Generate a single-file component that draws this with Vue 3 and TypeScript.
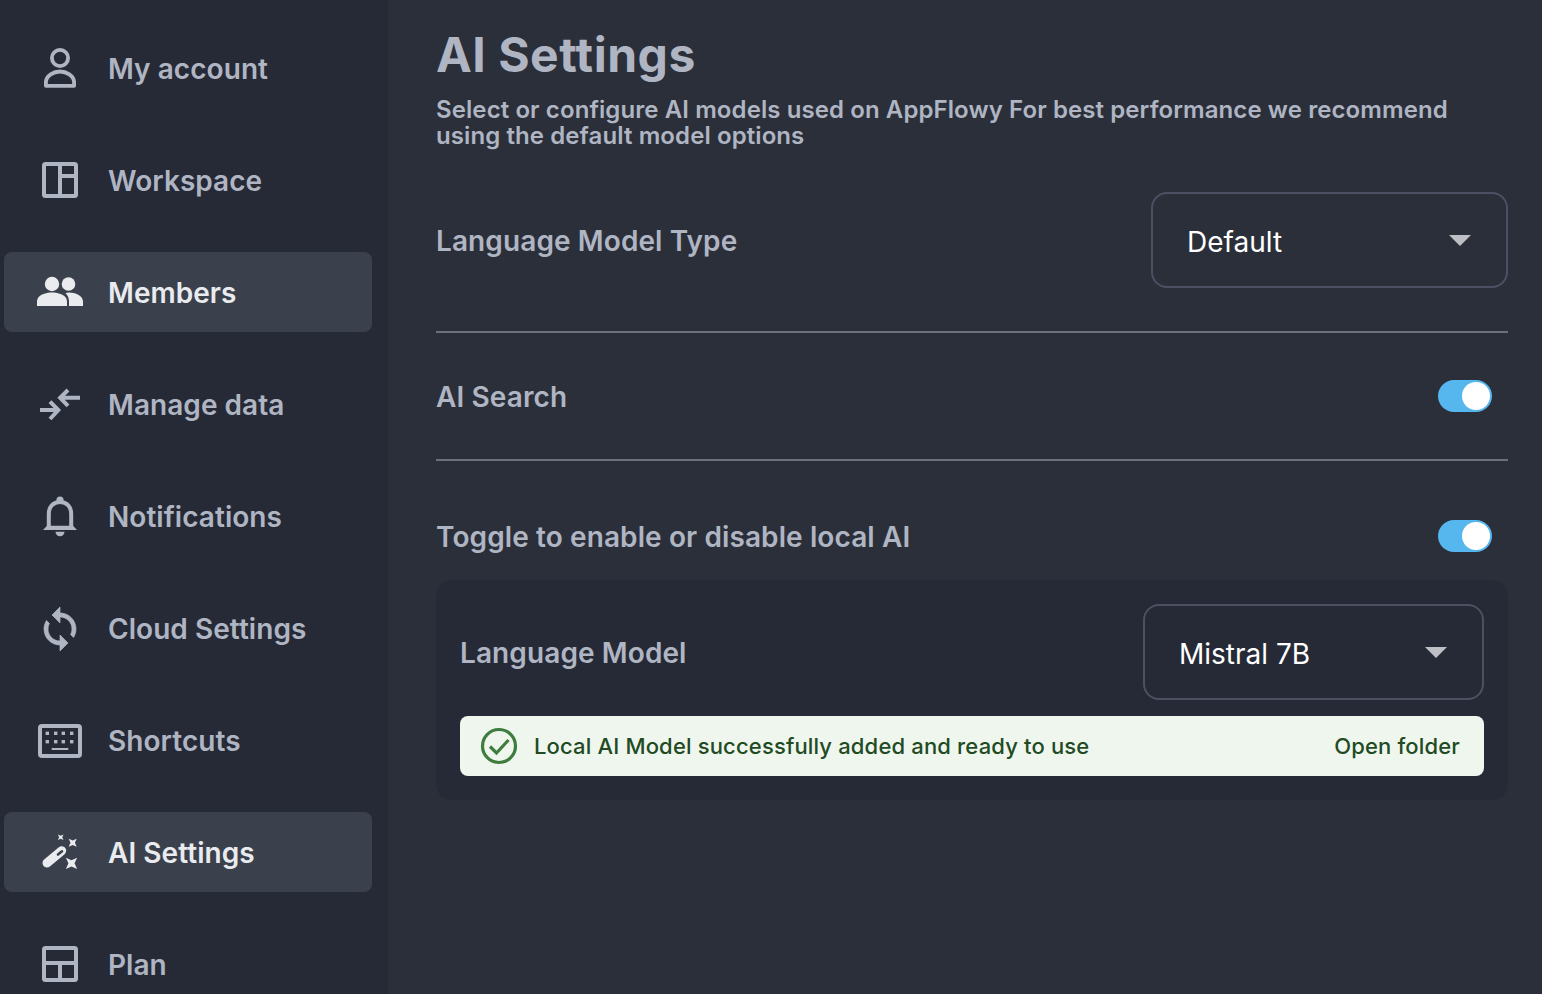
<script setup lang="ts">
interface NavItem {
  id: string
  label: string
  active?: boolean
}

const items: NavItem[] = [
  { id: 'account', label: 'My account' },
  { id: 'workspace', label: 'Workspace' },
  { id: 'members', label: 'Members', active: true },
  { id: 'data', label: 'Manage data' },
  { id: 'bell', label: 'Notifications' },
  { id: 'cloud', label: 'Cloud Settings' },
  { id: 'keys', label: 'Shortcuts' },
  { id: 'ai', label: 'AI Settings', active: true },
  { id: 'plan', label: 'Plan' },
]

const keyDots: { x: number; y: number }[] = []
for (const y of [14.6, 23]) {
  for (const x of [9.6, 18, 25.6, 34]) keyDots.push({ x, y })
}

function star(cx: number, cy: number, r: number): string {
  const k = r * 0.55
  return `M${cx - r} ${cy - r}L${cx} ${cy - k}L${cx + r} ${cy - r}L${cx + k} ${cy}L${cx + r} ${cy + r}L${cx} ${cy + k}L${cx - r} ${cy + r}L${cx - k} ${cy}Z`
}
</script>

<template>
  <div class="page">
    <aside class="sidebar">
      <div v-for="item in items" :key="item.id" class="nav-item" :class="{ active: item.active }">
        <svg class="nav-icon" viewBox="0 0 48 48" aria-hidden="true">
          <g v-if="item.id === 'account'" fill="none" stroke="currentColor" stroke-width="3.8">
            <circle cx="24" cy="13" r="8.1" />
            <path d="M9.900 40.800v-3.300c0-7 8-11 14.100-11s14.100 4 14.100 11v3.300z" stroke-linejoin="round" />
          </g>
          <g v-else-if="item.id === 'workspace'" fill="none" stroke="currentColor" stroke-width="4">
            <rect x="8" y="7" width="32" height="32" rx="1.500" />
            <path d="M24 7v32M24 19h16" />
          </g>
          <g v-else-if="item.id === 'members'" fill="currentColor">
            <circle cx="16" cy="15" r="7.200" />
            <circle cx="32.500" cy="15" r="6.800" />
            <path d="M1 37v-4.500C1 26 9.500 23.500 16 23.500s15 2.500 15 9V37z" />
            <path d="M33 37v-4.500c0-3.500-1.300-6.300-3.500-8.200 1.100-.3 2.200-.8 3.500-.8 6 0 14 3 14 9V37z" />
          </g>
          <g v-else-if="item.id === 'data'" fill="none" stroke="currentColor" stroke-width="4">
            <path d="M44 16.700H26.500M32 9l-7.800 7.800 7.800 8" />
            <path d="M4 29h19M14 20.700l8.300 8.300L14 38" />
          </g>
          <g v-else-if="item.id === 'bell'" fill="currentColor">
            <circle cx="24" cy="7" r="3.600" />
            <path d="M12.800 34V21C12.800 14 17 9 24 9s11.200 5 11.200 12v13" fill="none" stroke="currentColor" stroke-width="4" />
            <path d="M7 37l4-4.300h26l4 4.300z" />
            <path d="M19.500 38.700h9a4.500 4.500 0 0 1-9 0z" />
          </g>
          <path
            v-else-if="item.id === 'cloud'"
            transform="scale(2)"
            fill="currentColor"
            stroke="currentColor"
            stroke-width=".35"
            d="M12 4V1L8 5l4 4V6c3.310 0 6 2.690 6 6 0 1.010-.25 1.970-.7 2.800l1.460 1.460C19.540 15.030 20 13.570 20 12c0-4.420-3.580-8-8-8zm0 14c-3.310 0-6-2.690-6-6 0-1.010.25-1.970.7-2.800L5.240 7.740C4.460 8.970 4 10.430 4 12c0 4.420 3.580 8 8 8v3l4-4-4-4v3z"
          />
          <g v-else-if="item.id === 'keys'" fill="currentColor">
            <rect x="4" y="9" width="40" height="30" rx="2" fill="none" stroke="currentColor" stroke-width="4" />
            <rect v-for="(d, i) in keyDots" :key="i" :x="d.x" :y="d.y" width="3.400" height="3.400" />
            <rect x="15.700" y="31" width="16.600" height="2" />
          </g>
          <g v-else-if="item.id === 'ai'" fill="currentColor">
            <path d="M11 34 25.700 21.700" stroke="currentColor" stroke-width="9" stroke-linecap="round" fill="none" />
            <path d="M22 25.500 26 22.300" stroke="#3b414c" stroke-width="2.600" stroke-linecap="round" fill="none" />
            <path :d="star(24.700, 8.300, 2.800)" />
            <path :d="star(36.700, 13.700, 4)" />
            <path :d="star(35.500, 34.300, 5.600)" />
          </g>
          <g v-else fill="none" stroke="currentColor" stroke-width="4">
            <rect x="8" y="7" width="32" height="32" rx="1.500" />
            <path d="M8 22h32M24 22v17" />
          </g>
        </svg>
        <span class="nav-label">{{ item.label }}</span>
      </div>
    </aside>

    <main class="content">
      <h1 class="title">AI Settings</h1>
      <p class="desc">Select or configure AI models used on AppFlowy For best performance we recommend using the default model options</p>

      <section class="row row-select">
        <span class="label">Language Model Type</span>
        <div class="select select-wide">
          <span class="select-value">Default</span>
          <i class="caret"></i>
        </div>
      </section>
      <hr class="rule" />
      <section class="row row-toggle">
        <span class="label">AI Search</span>
        <div class="toggle"><i class="knob"></i></div>
      </section>
      <hr class="rule" />
      <section class="row row-toggle row-local">
        <span class="label">Toggle to enable or disable local AI</span>
        <div class="toggle"><i class="knob"></i></div>
      </section>

      <section class="card">
        <div class="row">
          <span class="label">Language Model</span>
          <div class="select select-narrow">
            <span class="select-value">Mistral 7B</span>
            <i class="caret"></i>
          </div>
        </div>
        <div class="banner">
          <svg class="check" viewBox="0 0 38 38" aria-hidden="true">
            <circle cx="19" cy="19" r="16.500" fill="none" stroke="#3e7d3e" stroke-width="3.200" />
            <path d="M10 19.500l6.500 6.500L28.500 13" fill="none" stroke="#3e7d3e" stroke-width="3.200" />
          </svg>
          <span class="banner-text">Local AI Model successfully added and ready to use</span>
          <span class="banner-action">Open folder</span>
        </div>
      </section>
    </main>
  </div>
</template>

<style scoped>
.page {
  display: flex;
  height: 994px;
  overflow: hidden;
  background: #2b2f3a;
  font-family: Inter, "Liberation Sans", sans-serif;
}
.sidebar {
  flex: 0 0 388px;
  box-sizing: border-box;
  padding: 28px 16px 0 4px;
  display: flex;
  flex-direction: column;
  gap: 32px;
  background: #262a36;
}
.nav-item {
  flex: 0 0 80px;
  display: flex;
  align-items: center;
  gap: 24px;
  padding-left: 32px;
  border-radius: 8px;
  color: #afb5c2;
}
.nav-item.active {
  background: #3b414c;
  color: #e9ebee;
}
.nav-icon {
  flex: 0 0 48px;
  width: 48px;
  height: 48px;
  margin-top: 2px;
}
.nav-label {
  padding-top: 2px;
  font-size: 28px;
  font-weight: 600;
  line-height: 34px;
  letter-spacing: 0.05px;
}
.content {
  flex: 1;
  min-width: 0;
  padding: 26px 34px 0 48px;
  box-sizing: border-box;
}
.title {
  margin: 0;
  font-size: 48px;
  line-height: 58px;
  font-weight: 700;
  letter-spacing: 0.5px;
  color: #afb5c2;
}
.desc {
  margin: 13px 0 0;
  font-size: 24px;
  line-height: 26px;
  font-weight: 600;
  letter-spacing: 0.09px;
  color: #afb5c2;
}
.row {
  display: flex;
  align-items: center;
  justify-content: space-between;
}
.row-select {
  margin-top: 43px;
}
.label {
  padding-top: 2px;
  font-size: 28px;
  line-height: 34px;
  font-weight: 600;
  letter-spacing: 0.1px;
  color: #afb5c2;
}
.select {
  box-sizing: border-box;
  height: 96px;
  display: flex;
  align-items: center;
  justify-content: space-between;
  padding: 0 35px 0 34px;
  border: 2px solid #4d5063;
  border-radius: 16px;
  color: #fff;
  font-size: 28px;
  line-height: 34px;
}
.select-value {
  padding-top: 4px;
}
.select-wide {
  width: 357px;
}
.select-narrow {
  width: 341px;
}
.caret {
  width: 0;
  height: 0;
  margin-top: 1px;
  border-left: 11px solid transparent;
  border-right: 11px solid transparent;
  border-top: 11px solid #bdbfc4;
}
.rule {
  margin: 43px 0 0;
  border: 0;
  height: 2px;
  background: #6f7178;
}
.row-toggle {
  height: 32px;
  margin-top: 47px;
  padding-right: 16px;
}
.row-toggle + .rule {
  margin-top: 47px;
}
.row-toggle.row-local {
  margin-top: 59px;
}
.toggle {
  box-sizing: border-box;
  width: 54px;
  height: 32px;
  padding: 2px;
  display: flex;
  justify-content: flex-end;
  border-radius: 16px;
  background: #56b7ee;
}
.knob {
  width: 28px;
  height: 28px;
  border-radius: 50%;
  background: #fff;
}
.card {
  margin-top: 28px;
  padding: 24px;
  border-radius: 16px;
  background: #262a36;
}
.banner {
  margin-top: 16px;
  height: 60px;
  box-sizing: border-box;
  display: flex;
  align-items: center;
  padding: 0 24px 0 20px;
  border-radius: 8px;
  background: #eff6ee;
  color: #224b24;
  font-size: 22px;
  line-height: 30px;
  font-weight: 500;
  letter-spacing: 0.16px;
}
.check {
  flex: 0 0 38px;
  width: 38px;
  height: 38px;
  margin-right: 16px;
}
.banner-text {
  flex: 1;
}
</style>

<style>
html, body {
  margin: 0;
  overflow: hidden;
  background: #2b2f3a;
}
</style>
